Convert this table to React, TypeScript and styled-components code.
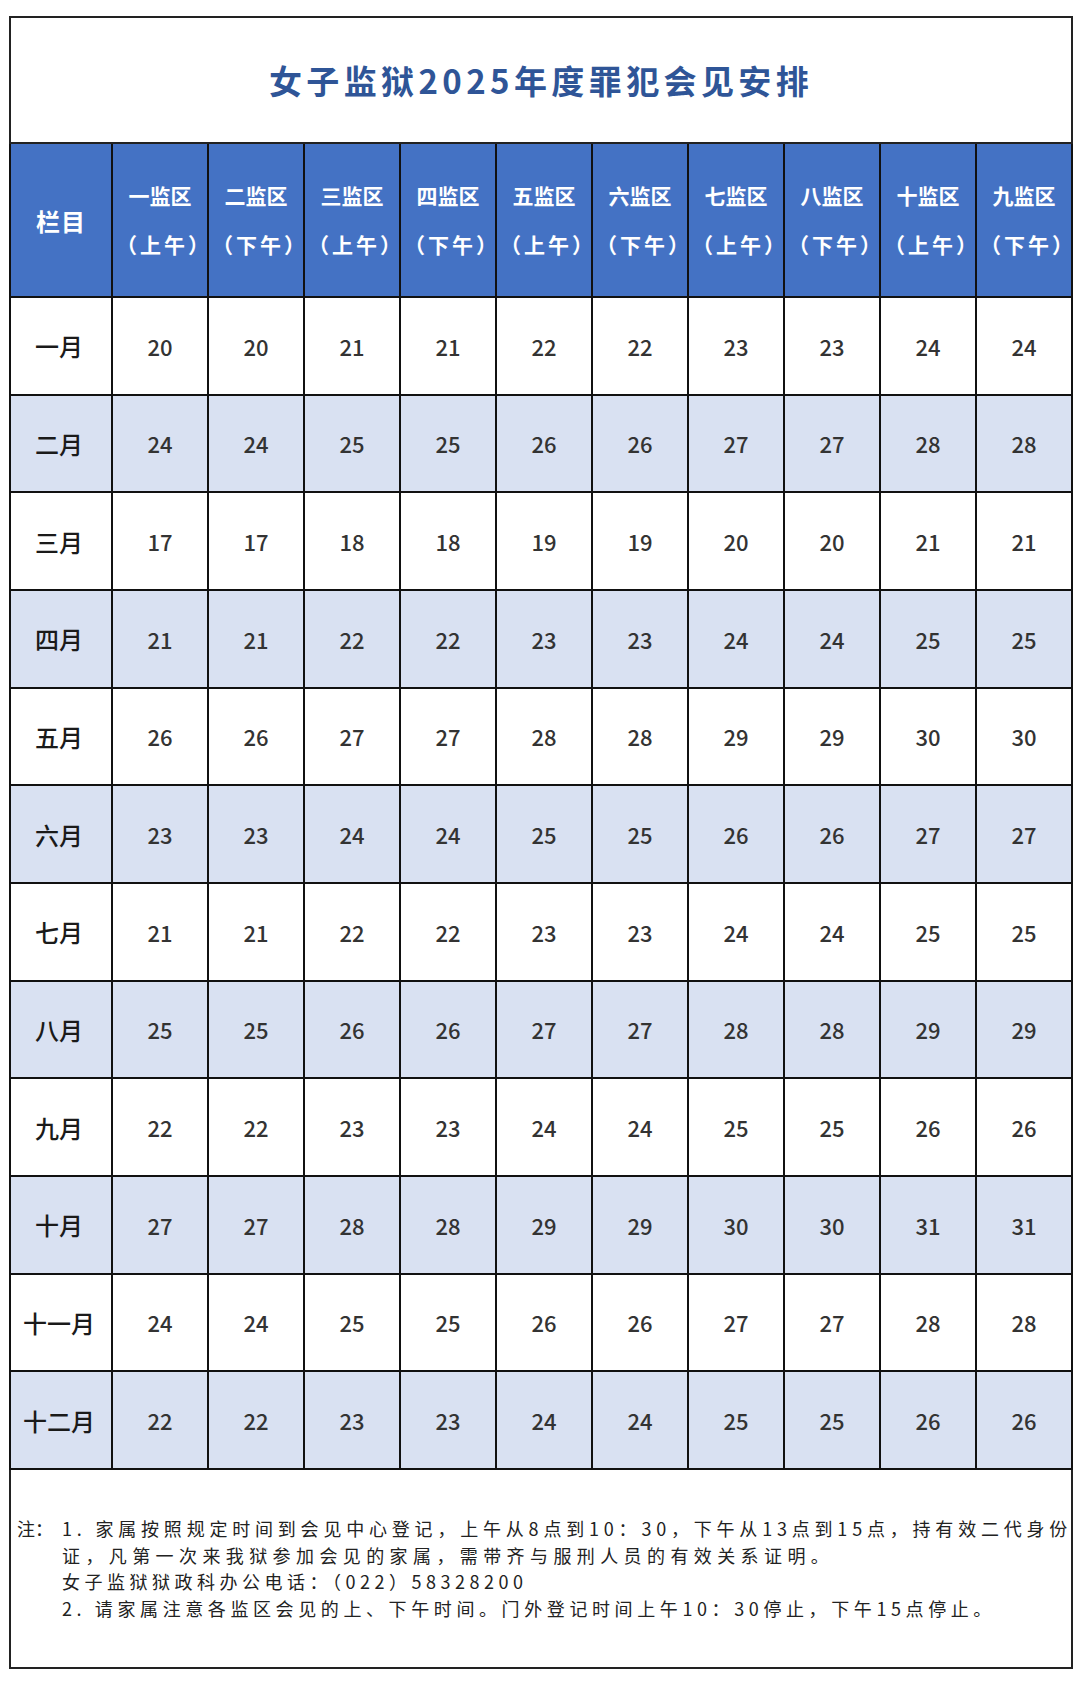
import React from "react";
import styled, { createGlobalStyle } from "styled-components";

const GlobalStyle = createGlobalStyle`
  html, body {
    margin: 0;
    padding: 0;
    background: #ffffff;
  }
  body {
    font-family: "Noto Sans CJK SC", "Noto Sans", sans-serif;
    color: #222;
  }
`;

const Page = styled.div`
  width: 1080px;
  height: 1681px;
  box-sizing: border-box;
  padding: 16px 0 0 9px;
  background: #fff;
`;

const Sheet = styled.table`
  border-collapse: collapse;
  table-layout: fixed;
  width: 1062px;
  border: 2px solid #222;
`;

const Col = styled.col<{ $w: number }>`
  width: ${(p) => p.$w}px;
`;

const TitleCell = styled.td`
  height: 124px;
  padding: 0;
  text-align: center;
  vertical-align: middle;
  border: 2px solid #222;
  font-size: 33px;
  font-weight: 700;
  letter-spacing: 4.4px;
  color: #2f5597;
`;

const HeadRow = styled.tr`
  background: #4472c4;
`;

const HeadCell = styled.th`
  height: 152px;
  padding: 0;
  border: 2px solid #111;
  color: #fff;
  font-weight: 700;
  font-size: 21px;
  line-height: 49px;
  text-align: center;
  vertical-align: middle;
  white-space: nowrap;
`;

const CornerCell = styled(HeadCell)`
  font-size: 24px;
  letter-spacing: 1px;
`;

const Line = styled.div`
  display: block;
`;

const Paren = styled.div`
  display: block;
  letter-spacing: 3px;
  padding-left: 3px;
`;

const BodyRow = styled.tr<{ $shade: boolean }>`
  background: ${(p) => (p.$shade ? "#d9e1f2" : "#ffffff")};
`;

const MonthCell = styled.td`
  height: 95.67px;
  padding: 0 4px 0 0;
  border: 2px solid #111;
  text-align: center;
  vertical-align: middle;
  font-size: 24px;
  font-weight: 500;
  color: #1a1a1a;
  white-space: nowrap;
`;

const NumCell = styled.td`
  padding: 0;
  border: 2px solid #111;
  text-align: center;
  vertical-align: middle;
  font-size: 22px;
  font-weight: 500;
  color: #333;
`;

const NoteCell = styled.td`
  height: 197px;
  padding: 0 6px 0 6px;
  border: 2px solid #222;
  vertical-align: middle;
`;

const NoteBlock = styled.div`
  display: flex;
  font-size: 18px;
  line-height: 26.5px;
  color: #222;
`;

const NoteLabel = styled.div`
  flex: 0 0 auto;
  width: 45px;
  white-space: nowrap;
`;

const NoteLines = styled.div`
  flex: 1 1 auto;
  display: flex;
  flex-direction: column;
`;

const NoteLine = styled.div<{ $spacing: number }>`
  white-space: nowrap;
  text-align: left;
  letter-spacing: ${(p) => p.$spacing}px;
`;

const zones = [
  ["一监区", "（上午）"],
  ["二监区", "（下午）"],
  ["三监区", "（上午）"],
  ["四监区", "（下午）"],
  ["五监区", "（上午）"],
  ["六监区", "（下午）"],
  ["七监区", "（上午）"],
  ["八监区", "（下午）"],
  ["十监区", "（上午）"],
  ["九监区", "（下午）"],
];

const rows: [string, number[]][] = [
  ["一月", [20, 20, 21, 21, 22, 22, 23, 23, 24, 24]],
  ["二月", [24, 24, 25, 25, 26, 26, 27, 27, 28, 28]],
  ["三月", [17, 17, 18, 18, 19, 19, 20, 20, 21, 21]],
  ["四月", [21, 21, 22, 22, 23, 23, 24, 24, 25, 25]],
  ["五月", [26, 26, 27, 27, 28, 28, 29, 29, 30, 30]],
  ["六月", [23, 23, 24, 24, 25, 25, 26, 26, 27, 27]],
  ["七月", [21, 21, 22, 22, 23, 23, 24, 24, 25, 25]],
  ["八月", [25, 25, 26, 26, 27, 27, 28, 28, 29, 29]],
  ["九月", [22, 22, 23, 23, 24, 24, 25, 25, 26, 26]],
  ["十月", [27, 27, 28, 28, 29, 29, 30, 30, 31, 31]],
  ["十一月", [24, 24, 25, 25, 26, 26, 27, 27, 28, 28]],
  ["十二月", [22, 22, 23, 23, 24, 24, 25, 25, 26, 26]],
];

const notes: [string, number][] = [
  ["1. 家属按照规定时间到会见中心登记，上午从8点到10：30，下午从13点到15点，持有效二代身份", 4.8],
  ["证，凡第一次来我狱参加会见的家属，需带齐与服刑人员的有效关系证明。", 5.4],
  ["女子监狱狱政科办公电话：（022）58328200", 4.5],
  ["2. 请家属注意各监区会见的上、下午时间。门外登记时间上午10：30停止，下午15点停止。", 4.6],
];

export default function App() {
  return (
    <>
      <GlobalStyle />
      <Page>
        <Sheet>
          <colgroup>
            <Col $w={102} />
            {zones.map((_, i) => (
              <Col key={i} $w={96} />
            ))}
          </colgroup>
          <tbody>
            <tr>
              <TitleCell colSpan={11}>女子监狱2025年度罪犯会见安排</TitleCell>
            </tr>
            <HeadRow>
              <CornerCell>栏目</CornerCell>
              {zones.map(([z, t]) => (
                <HeadCell key={z}>
                  <Line>{z}</Line>
                  <Paren>{t}</Paren>
                </HeadCell>
              ))}
            </HeadRow>
            {rows.map(([m, vals], i) => (
              <BodyRow key={m} $shade={i % 2 === 1}>
                <MonthCell>{m}</MonthCell>
                {vals.map((v, j) => (
                  <NumCell key={j}>{v}</NumCell>
                ))}
              </BodyRow>
            ))}
            <tr>
              <NoteCell colSpan={11}>
                <NoteBlock>
                  <NoteLabel>注：</NoteLabel>
                  <NoteLines>
                    {notes.map(([t, s]) => (
                      <NoteLine key={t} $spacing={s}>
                        {t}
                      </NoteLine>
                    ))}
                  </NoteLines>
                </NoteBlock>
              </NoteCell>
            </tr>
          </tbody>
        </Sheet>
      </Page>
    </>
  );
}
